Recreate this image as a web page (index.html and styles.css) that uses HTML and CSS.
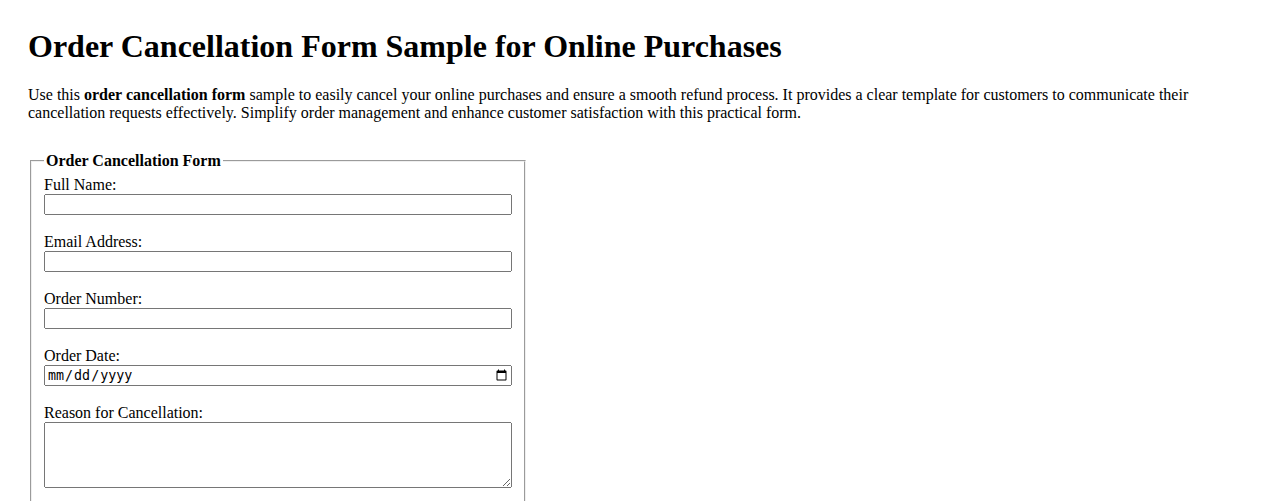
FILE: index.html
```html
<!DOCTYPE html>
<html lang="en">
<head>
<meta charset="utf-8">
<title>Order Cancellation Form Sample for Online Purchases</title>
<link rel="stylesheet" href="styles.css">
</head>
<body>
<h1 class="page-title">Order Cancellation Form Sample for Online Purchases</h1>
<p class="intro">Use this <strong>order cancellation form</strong> sample to easily cancel your online purchases and ensure a smooth refund process. It provides a clear template for customers to communicate their cancellation requests effectively. Simplify order management and enhance customer satisfaction with this practical form.</p>
<form class="cancel-form">
  <fieldset class="cancel-fieldset">
    <legend class="cancel-legend">Order Cancellation Form</legend>
    <label class="field-label" for="fullname">Full Name:</label>
    <input class="field-input" type="text" id="fullname" name="fullname">
    <label class="field-label" for="email">Email Address:</label>
    <input class="field-input" type="email" id="email" name="email">
    <label class="field-label" for="ordernum">Order Number:</label>
    <input class="field-input" type="text" id="ordernum" name="ordernum">
    <label class="field-label" for="orderdate">Order Date:</label>
    <input class="field-input" type="date" id="orderdate" name="orderdate">
    <label class="field-label" for="reason">Reason for Cancellation:</label>
    <textarea class="field-input" id="reason" name="reason" rows="4"></textarea>
    <button class="submit-btn" type="submit">Submit Cancellation</button>
  </fieldset>
</form>
</body>
</html>
```

FILE: styles.css
```css
body {
  margin: 28px;
  font-family: "Liberation Serif", "Times New Roman", serif;
  font-size: 16px;
  color: #000;
  background: #fff;
}

.page-title {
  font-size: 32px;
  margin: 0 0 21px;
}

.intro {
  margin: 0 0 30px;
}

.cancel-form {
  max-width: 500px;
}

.cancel-fieldset {
  margin: 0 2px;
}

.cancel-legend {
  font-weight: bold;
}

.field-label {
  display: block;
}

.field-input {
  display: block;
  width: 100%;
  box-sizing: border-box;
  margin: 0 0 18px;
}

.submit-btn {
  display: block;
}
```
